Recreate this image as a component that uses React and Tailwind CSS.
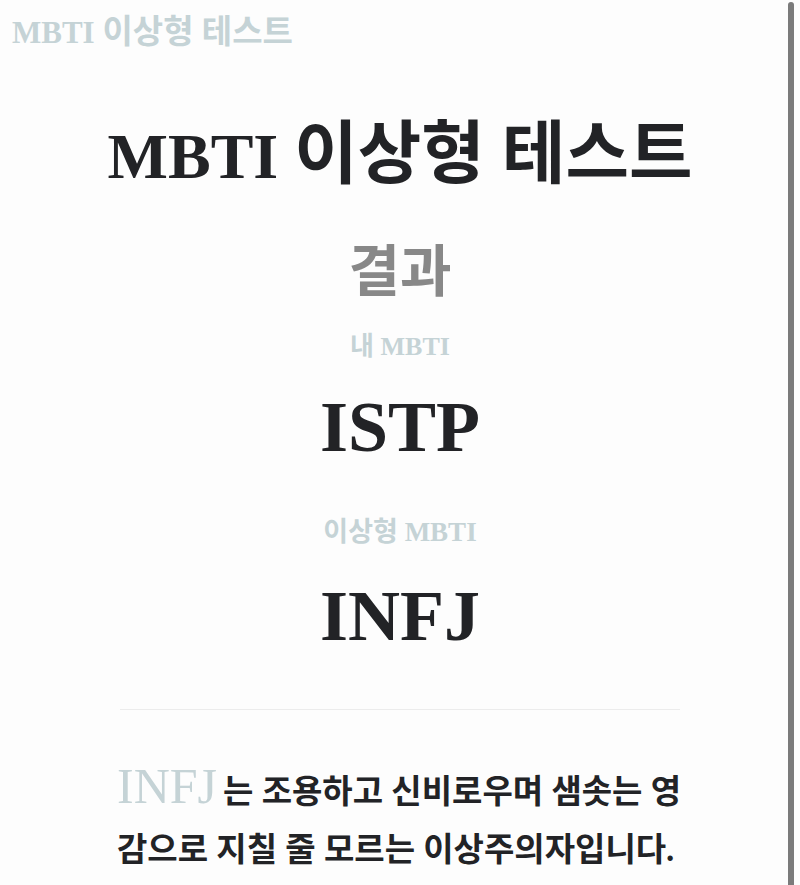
export default function App() {
  const serif = { fontFamily: '"Liberation Serif", "Noto Sans CJK KR", serif' };
  return (
    <div className="relative h-[885px] w-[800px] overflow-hidden bg-[#fdfdfd]" style={serif}>
      <main className="flex flex-col">
        <header className="pl-[12px] pt-[12px] text-[31px] leading-[40px] font-bold text-[#c5d3d6]">
          MBTI <span className="text-[33px]">이상형 테스트</span>
        </header>

        <section className="mt-[62px] flex flex-col items-center">
          <h1 className="text-[64px] leading-[80px] font-bold text-[#222326]">
            MBTI <span className="text-[69px]">이상형 테스트</span>
          </h1>
          <h2 className="mt-[45px] text-[56px] leading-[60px] font-bold text-[#888888]">결과</h2>

          <p className="mt-[29px] text-[26px] leading-[32px] font-bold text-[#c5d3d6]">내 MBTI</p>
          <p className="mt-[22px] text-[72px] leading-[84px] font-bold text-[#222326]">ISTP</p>

          <p className="mt-[47px] text-[27px] leading-[32px] font-bold text-[#c5d3d6]">이상형 MBTI</p>
          <p className="mt-[26px] text-[72px] leading-[84px] font-bold text-[#222326]">INFJ</p>
        </section>

        <hr className="mx-auto mt-[51px] w-[560px] border-0 border-t border-[#ececec]" />

        <p className="mx-auto mt-[51px] w-[566px] text-[33px] leading-[58px] font-bold text-[#222326]">
          <span className="mr-[6px] text-[50px] leading-none font-normal text-[#c5d3d6]">INFJ</span>
          는 조용하고 신비로우며 샘솟는 영감으로 지칠 줄 모르는 이상주의자입니다.
        </p>
      </main>

      {/* scrollbar thumb overlaying the page edge */}
      <div className="absolute top-[2px] right-[6px] bottom-0 w-[6px] rounded-t-full bg-[#7b7b7b]" />
    </div>
  );
}
